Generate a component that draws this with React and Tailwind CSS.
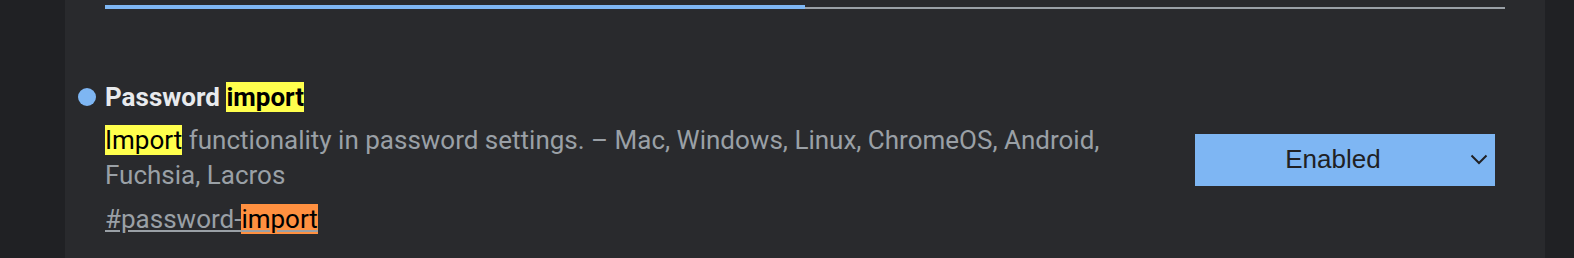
export default function App() {
  return (
    <div className="flex h-[258px] w-full bg-[#202124] overflow-hidden" style={{ fontFamily: "Roboto, 'Liberation Sans', sans-serif" }}>
      <div className="w-[65px] shrink-0" />
      <div className="w-[1480px] shrink-0 bg-[#292a2d] px-[40px]">
        <div className="flex items-end pt-[5px]">
          <div className="w-[700px] h-[4px] bg-[#7eb6f3]" />
          <div className="flex-1 h-[2px] bg-[#9aa0a6]" />
        </div>
        <div className="mt-[73px] flex items-center">
          <div className="w-[1040px] shrink-0">
            <div className="-ml-[27px] flex items-center h-[30px]">
              <span className="w-[18px] h-[18px] rounded-full bg-[#7eb6f3] mr-[9px] shrink-0" />
              <h2 className="text-[26px] font-bold leading-[30px] text-[#e8eaed] whitespace-nowrap">
                Password <span className="inline-block bg-[#ffff4d] text-black leading-[30px]">import</span>
              </h2>
            </div>
            <p className="mt-[11px] text-[26px] leading-[35px] text-[#9aa0a6]">
              <span className="inline-block bg-[#ffff4d] text-black leading-[30px]">Import</span> functionality in password settings. – Mac, Windows, Linux, ChromeOS, Android, Fuchsia, Lacros
            </p>
            <div className="mt-[9px] text-[26px] leading-[35px] text-[#9aa0a6]">
              <a className="underline decoration-[#9aa0a6]">
                #password-<span className="inline-block bg-[#ff9040] text-black leading-[30px] underline decoration-[#9aa0a6]">import</span>
              </a>
            </div>
          </div>
          <div className="ml-[50px] w-[300px] h-[52px] shrink-0 bg-[#7eb6f3] flex items-center relative">
            <span className="flex-1 text-center pr-[24px] text-[26px] text-[#202124]" style={{ fontFamily: "'Liberation Sans', Arial, sans-serif" }}>Enabled</span>
            <svg className="absolute right-[7px] top-[20px]" width="18" height="11" viewBox="0 0 18 11">
              <polyline points="1.5,1.5 9,9 16.5,1.5" fill="none" stroke="#202124" strokeWidth="2" />
            </svg>
          </div>
        </div>
      </div>
      <div className="flex-1" />
    </div>
  );
}
